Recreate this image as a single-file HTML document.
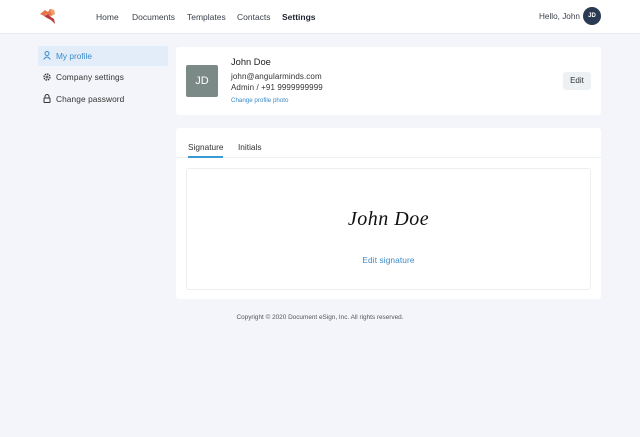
<!DOCTYPE html>
<html><head><style>
*{margin:0;padding:0;box-sizing:border-box}
body{width:640px;height:437px;background:#f3f5fa;font-family:"Liberation Sans",sans-serif;color:#2a2f3a;position:relative;overflow:hidden}
.a{position:absolute}
.hdr{left:0;top:0;width:640px;height:34px;background:#fff;border-bottom:1px solid #e8ebf1}
.nav{font-size:8.5px;color:#3a3f4a;top:12px}
.card{background:#fff;border-radius:3px}
</style></head><body>
<div class="a hdr"></div>
<svg class="a" style="left:38px;top:7px" width="20" height="19" viewBox="0 0 20 19">
<path d="M2 7 L7 3 L10 5 L12 2 L16 3 L17 7 L13 9 L9 7 L6 9 Z" fill="#e8754a"/>
<path d="M6 9 L10 7 L13 10 L16 12 L17 17 L15 15 L13 13 L9 11 Z" fill="#b83a3a"/>
<path d="M12 3 L16 3 L17 7 L14 8 Z" fill="#f0a070"/>
</svg>
<div class="a nav" style="left:96px">Home</div>
<div class="a nav" style="left:132px">Documents</div>
<div class="a nav" style="left:187px">Templates</div>
<div class="a nav" style="left:237px">Contacts</div>
<div class="a nav" style="left:282px;color:#1f2430;font-weight:bold">Settings</div>
<div class="a nav" style="left:539px;top:12px;font-size:8.2px">Hello, John</div>
<div class="a" style="left:583px;top:7px;width:18px;height:18px;border-radius:50%;background:#2a3a52;color:#fff;font-size:6px;font-weight:bold;text-align:center;line-height:18px">JD</div>

<div class="a" style="left:38px;top:46px;width:130px;height:20px;background:#e2edf9;border-radius:2px"></div>
<svg class="a" style="left:43px;top:51px" width="8" height="9" viewBox="0 0 8 9"><circle cx="4" cy="2.5" r="2" fill="none" stroke="#3a8ac8" stroke-width="1"/><path d="M0.7 8.5 Q4 3.5 7.3 8.5" fill="none" stroke="#3a8ac8" stroke-width="1"/></svg>
<div class="a" style="left:56px;top:51px;font-size:8.3px;color:#3a8ac8">My profile</div>
<svg class="a" style="left:43px;top:73px" width="8" height="8" viewBox="0 0 8 8"><circle cx="4" cy="4" r="3" fill="none" stroke="#333" stroke-width="1.3" stroke-dasharray="1.5 0.8"/><circle cx="4" cy="4" r="1" fill="none" stroke="#333" stroke-width="0.8"/></svg>
<div class="a" style="left:56px;top:72px;font-size:8.3px;color:#333;letter-spacing:0.1px">Company settings</div>
<svg class="a" style="left:43px;top:94px" width="8" height="9" viewBox="0 0 8 9"><path d="M2 4 V2.5 a2 2 0 0 1 4 0 V4" fill="none" stroke="#333" stroke-width="1"/><rect x="1" y="4" width="6" height="4.5" rx="0.5" fill="none" stroke="#333" stroke-width="1"/></svg>
<div class="a" style="left:56px;top:94px;font-size:8.3px;color:#333;letter-spacing:0.1px">Change password</div>

<div class="a card" style="left:176px;top:47px;width:425px;height:68px"></div>
<div class="a" style="left:186px;top:65px;width:32px;height:32px;background:#7b8987;border-radius:2px;color:#fff;font-size:11px;text-align:center;line-height:32px">JD</div>
<div class="a" style="left:231px;top:57px;font-size:9.3px;color:#222">John Doe</div>
<div class="a" style="left:231px;top:72px;font-size:8px;color:#333;letter-spacing:0.1px">john@angularminds.com</div>
<div class="a" style="left:231px;top:83px;font-size:8px;color:#333;letter-spacing:0.1px">Admin / +91 9999999999</div>
<div class="a" style="left:231px;top:97px;font-size:6.2px;color:#3a8ac8">Change profile photo</div>
<div class="a" style="left:563px;top:72px;width:28px;height:18px;background:#eef1f4;border-radius:3px;font-size:8px;text-align:center;line-height:18px;color:#333">Edit</div>

<div class="a card" style="left:176px;top:128px;width:425px;height:171px"></div>
<div class="a" style="left:176px;top:157px;width:425px;height:1px;background:#eef0f4"></div>
<div class="a" style="left:188px;top:142px;font-size:8.3px;color:#333">Signature</div>
<div class="a" style="left:188px;top:156px;width:35px;height:2px;background:#3a9ad4"></div>
<div class="a" style="left:238px;top:142px;font-size:8.3px;color:#333">Initials</div>
<div class="a" style="left:186px;top:168px;width:405px;height:122px;border:1px solid #eceef2;border-radius:3px"></div>
<div class="a" style="left:186px;top:208px;width:405px;text-align:center;font-family:'Liberation Serif',serif;font-style:italic;font-size:20px;color:#111;letter-spacing:0.5px">John Doe</div>
<div class="a" style="left:186px;top:255px;width:405px;text-align:center;font-size:8.3px;color:#3a8ac8;letter-spacing:0.1px">Edit signature</div>
<div class="a" style="left:0;top:314px;width:640px;text-align:center;font-size:6.4px;color:#555">Copyright © 2020 Document eSign, Inc. All rights reserved.</div>
</body></html>
